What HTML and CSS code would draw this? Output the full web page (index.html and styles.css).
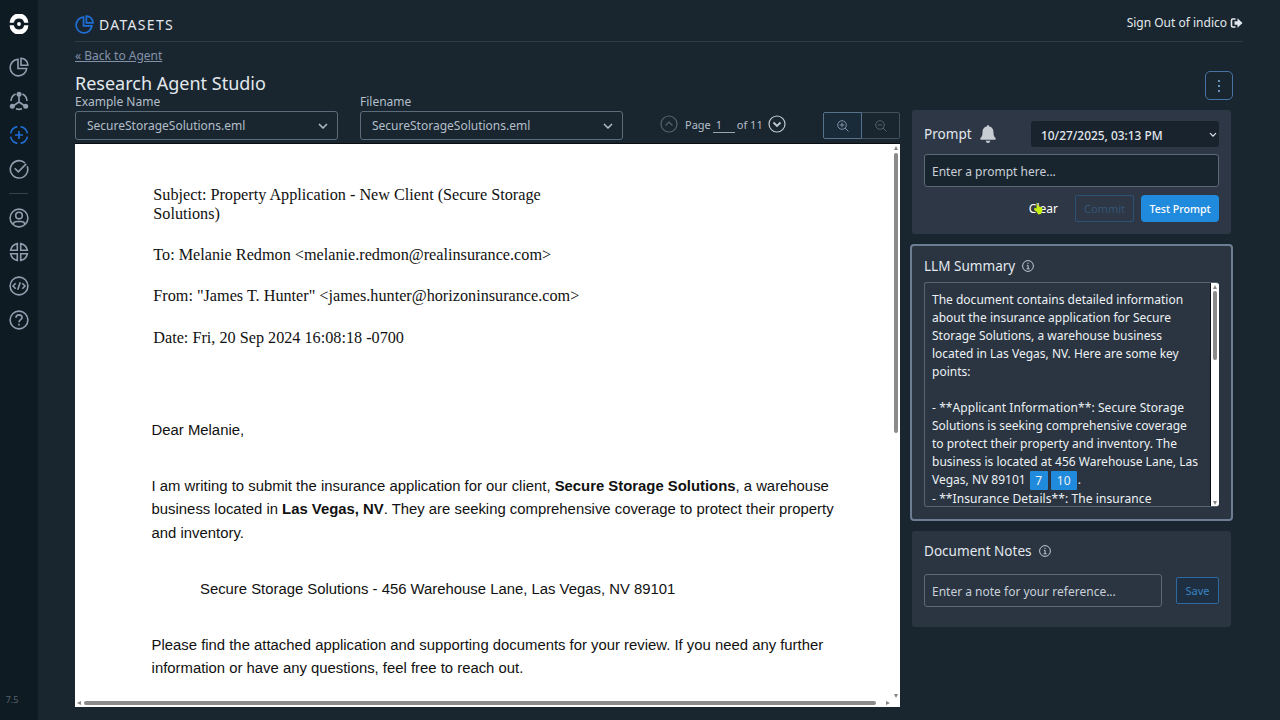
FILE: index.html
```html
<!DOCTYPE html>
<html lang="en">
<head>
    <meta charset="UTF-8">
    <meta name="viewport" content="width=device-width, initial-scale=1.0">
    <title>Research Agent Studio</title>
    <link rel="stylesheet" href="styles.css">
</head>
<body>

    <!-- Sidebar -->
    <nav class="sidebar">
        <svg class="logo" viewBox="0 0 20 20"><path d="M.6 8.800A9.400 9.400 0 0 1 19.400 8.800H15.200A5.300 5.300 0 0 0 4.800 8.800zM.6 11.200A9.400 9.400 0 0 0 19.400 11.200H15.200A5.300 5.300 0 0 1 4.800 11.200z"/><circle cx="10" cy="10" r="1.900"/></svg>
        <svg class="nav-icon" viewBox="0 0 20 20"><path d="M9 2.300A8.300 8.300 0 1 0 17.700 11.500H9zM12 1.200V8.300H18.900A7 7 0 0 0 12 1.200z"/></svg>
        <svg class="nav-icon" viewBox="0 0 20 20"><path d="M6.600 3A8.200 8.200 0 0 0 2 10M13.400 3A8.200 8.200 0 0 1 18 10M7 17.800A9 9 0 0 0 13 17.800M10 4V11L4 15M10 11L16 15"/><circle class="solid" cx="10" cy="3.200" r="2.500"/><circle class="solid" cx="3.300" cy="15.300" r="2.500"/><circle class="solid" cx="16.700" cy="15.300" r="2.500"/></svg>
        <svg class="nav-icon active" viewBox="0 0 20 20"><path d="M8.300 1.600A8.600 8.600 0 0 0 1.600 8.300M11.700 1.600A8.600 8.600 0 0 1 18.400 8.300M1.600 11.700A8.600 8.600 0 0 0 8.300 18.400M18.400 11.700A8.600 8.600 0 0 1 11.700 18.400M10 6V14M6 10H14"/></svg>
        <svg class="nav-icon" viewBox="0 0 20 20"><path d="M16 4A8.700 8.700 0 1 0 18.200 7.300M5.800 9.300L9.300 12.800L17.200 4.900"/></svg>
        <hr class="nav-divider">
        <svg class="nav-icon" viewBox="0 0 20 20"><circle cx="10" cy="10" r="8.900"/><circle cx="10" cy="7.600" r="3.300"/><path d="M4 16.300C5 12.500 8 13.600 10 13.600S15 12.500 16 16.300"/></svg>
        <svg class="nav-icon" viewBox="0 0 20 20"><path d="M8.300 1.600V8.300H1.600A8.600 8.600 0 0 1 8.300 1.600zM11.700 1.600V8.300H18.400A8.600 8.600 0 0 0 11.700 1.600zM8.300 18.400V11.700H1.600A8.600 8.600 0 0 0 8.300 18.400zM11.700 18.400V11.700H18.400A8.600 8.600 0 0 1 11.700 18.400z"/></svg>
        <svg class="nav-icon" viewBox="0 0 20 20"><circle cx="10" cy="10" r="8.900"/><path d="M6.700 7.200L4 10L6.700 12.800M13.300 7.200L16 10L13.300 12.800M11.300 6.300L8.700 13.700"/></svg>
        <svg class="nav-icon" viewBox="0 0 20 20"><circle cx="10" cy="10" r="8.900"/><path d="M7 7.700C7 3.900 13.100 4 13.100 7.600C13.100 9.800 10 9.700 10 12.300M10 13.800V15.500"/></svg>
        <span class="version">7.5</span>
    </nav>

    <main class="main">
        <header class="topbar">
            <div class="brand">
                <svg class="brand-icon" viewBox="0 0 20 20"><path d="M9 2.300A8.300 8.300 0 1 0 17.700 11.500H9zM12 1.200V8.300H18.900A7 7 0 0 0 12 1.200z"/></svg>
                <span>DATASETS</span>
            </div>
            <div class="sign-out">
                <span>Sign Out of indico</span>
                <svg viewBox="0 0 12 10"><path d="M5 1H2.200Q1 1 1 2.200V7.800Q1 9 2.200 9H5" fill="none" stroke="currentColor" stroke-width="1.600"/><path d="M4 3.200H7V.3L12 5L7 9.700V6.800H4z" fill="currentColor"/></svg>
            </div>
        </header>

        <div class="heading">
            <div>
                <a class="back">« Back to Agent</a>
                <h1>Research Agent Studio</h1>
            </div>
            <button class="more"><i></i><i></i><i></i></button>
        </div>

        <div class="workspace">
            <section class="viewer">
                <div class="toolbar">
                    <div class="field">
                        <label>Example Name</label>
                        <div class="select"><span>SecureStorageSolutions.eml</span><svg viewBox="0 0 10 6"><path d="M1 1L5 5L9 1"/></svg></div>
                    </div>
                    <div class="field">
                        <label>Filename</label>
                        <div class="select"><span>SecureStorageSolutions.eml</span><svg viewBox="0 0 10 6"><path d="M1 1L5 5L9 1"/></svg></div>
                    </div>
                    <div class="pager">
                        <svg class="page-btn disabled" viewBox="0 0 18 18"><circle cx="9" cy="9" r="8"/><path d="M5.500 10.500L9 7L12.500 10.500"/></svg>
                        <span class="page-word">Page</span>
                        <span class="page-number">1</span>
                        <span class="page-total">of 11</span>
                        <svg class="page-btn" viewBox="0 0 18 18"><circle cx="9" cy="9" r="8"/><path d="M5.500 7.500L9 11L12.500 7.500" stroke-width="1.800"/></svg>
                    </div>
                    <div class="zoom">
                        <span class="zoom-in"><svg viewBox="0 0 12 12"><circle cx="5" cy="5" r="4.300"/><path d="M8 8L11.500 11.500M2.700 5H7.300M5 2.700V7.300"/></svg></span>
                        <span class="zoom-out"><svg viewBox="0 0 12 12"><circle cx="5" cy="5" r="4.300"/><path d="M8 8L11.500 11.500M2.700 5H7.300"/></svg></span>
                    </div>
                </div>

                <div class="document">
                    <article class="page">
                        <div class="mail-head">
                            <p>Subject: Property Application - New Client (Secure Storage<br>Solutions)</p>
                            <p>To: Melanie Redmon &lt;melanie.redmon@realinsurance.com&gt;</p>
                            <p>From: "James T. Hunter" &lt;james.hunter@horizoninsurance.com&gt;</p>
                            <p>Date: Fri, 20 Sep 2024 16:08:18 -0700</p>
                        </div>
                        <div class="mail-body">
                            <p>Dear Melanie,</p>
                            <p>I am writing to submit the insurance application for our client, <b>Secure Storage Solutions</b>, a warehouse<br>business located in <b>Las Vegas, NV</b>. They are seeking comprehensive coverage to protect their property<br>and inventory.</p>
                            <p class="indent">Secure Storage Solutions - 456 Warehouse Lane, Las Vegas, NV 89101</p>
                            <p>Please find the attached application and supporting documents for your review. If you need any further<br>information or have any questions, feel free to reach out.</p>
                        </div>
                    </article>
                    <div class="scroll-y"><i class="arrow up"></i><i class="thumb"></i><i class="arrow down"></i></div>
                    <div class="scroll-x"><i class="arrow left"></i><i class="thumb"></i><i class="arrow right"></i></div>
                </div>
            </section>

            <aside class="side">
                <section class="card prompt">
                    <div class="card-head">
                        <h2>Prompt</h2>
                        <svg class="bell" viewBox="0 0 16 18"><path d="M8 0Q9.200 0 9.200 1.500C12.500 2.200 13.500 4.500 13.500 7.500C13.500 11 14.500 12 15.700 13.200Q16 14.800 14.800 14.800H1.200Q0 14.800 .3 13.200C1.500 12 2.500 11 2.500 7.500C2.500 4.500 3.500 2.200 6.800 1.500Q6.800 0 8 0zM5.700 15.700H10.300Q10 18 8 18T5.700 15.700z"/></svg>
                        <div class="date"><span>10/27/2025, 03:13 PM</span><svg viewBox="0 0 10 6"><path d="M2 1.200L5 4.200L8 1.200"/></svg></div>
                    </div>
                    <div class="input">Enter a prompt here...</div>
                    <div class="actions">
                        <span class="clear">Clear<svg class="pointer" viewBox="0 0 9 13"><path d="M2.500 0L4 4L8 5.500L8.500 8L7 12L4 12.500L3 10L0 8L.5 5.500L2.500 6.500z"/></svg></span>
                        <button class="btn commit">Commit</button>
                        <button class="btn test">Test Prompt</button>
                    </div>
                </section>

                <section class="card summary">
                    <div class="card-head">
                        <h2>LLM Summary</h2>
                        <svg class="info" viewBox="0 0 12 12"><circle cx="6" cy="6" r="5.400"/><path d="M6 2.800V4M4.800 5.400H6.100V8.700M4.600 8.800H7.600"/></svg>
                    </div>
                    <div class="summary-box">
                        <div class="summary-text">The document contains detailed information<br>about the insurance application for Secure<br>Storage Solutions, a warehouse business<br>located in Las Vegas, NV. Here are some key<br>points:<br><br><span class="item">- **Applicant Information**: Secure Storage</span><br>Solutions is seeking comprehensive coverage<br>to protect their property and inventory. The<br>business is located at 456 Warehouse Lane, Las
                            <div class="cite-line">Vegas, NV 89101 <span class="cite">7</span><span class="cite wide">10</span>.</div>
                            <span class="item">- **Insurance Details**: The insurance</span></div>
                        <div class="summary-scroll"><i class="arrow up"></i><i class="thumb"></i><i class="arrow down"></i></div>
                    </div>
                </section>

                <section class="card notes">
                    <div class="card-head">
                        <h2>Document Notes</h2>
                        <svg class="info" viewBox="0 0 12 12"><circle cx="6" cy="6" r="5.400"/><path d="M6 2.800V4M4.800 5.400H6.100V8.700M4.600 8.800H7.600"/></svg>
                    </div>
                    <div class="note-row">
                        <div class="input">Enter a note for your reference...</div>
                        <button class="btn save">Save</button>
                    </div>
                </section>
            </aside>
        </div>
    </main>

</body>
</html>
```
FILE: styles.css
```css
* {
    box-sizing: border-box;
}

body {
    margin: 0;
    width: 1280px;
    height: 720px;
    overflow: hidden;
    display: flex;
    background-color: #19262f;
    color: #e3e8ee;
    font-family: "Noto Sans", sans-serif;
    font-size: 12px;
    white-space: nowrap;
}

h1, h2, p {
    margin: 0;
    font-weight: normal;
}

svg {
    display: block;
    flex: none;
    fill: none;
    stroke: currentColor;
}

button {
    font-family: inherit;
    padding: 0;
}

/* Sidebar */
.sidebar {
    width: 38px;
    flex: none;
    display: flex;
    flex-direction: column;
    align-items: center;
    padding: 14px 1px 13px 0;
    background-color: #0f1b23;
    color: #919eae;
}

.logo {
    width: 20px;
    height: 20px;
    margin-bottom: 23.3px;
    fill: #fff;
    stroke: none;
}

.solid {
    fill: currentColor;
    stroke: none;
}

.nav-icon {
    width: 20px;
    height: 20px;
    margin-bottom: 13.75px;
    stroke-width: 1.6;
}

.nav-icon.active {
    color: #1f6fd6;
}

.nav-divider {
    width: 19px;
    height: 1px;
    margin: 1px 0 14px;
    border: none;
    background-color: #34424c;
}

.version {
    margin-top: auto;
    margin-right: 13px;
    font-size: 9px;
    line-height: 14px;
    color: #56626c;
}

/* Header */
.main {
    flex: 1;
    display: flex;
    flex-direction: column;
    padding: 0 37px 13px;
}

.topbar {
    height: 42px;
    flex: none;
    display: flex;
    justify-content: space-between;
    align-items: center;
    padding-top: 7px;
    border-bottom: 1px solid #2e3b44;
}

.brand {
    display: flex;
    align-items: center;
    gap: 5px;
    font-size: 14px;
    letter-spacing: 1.3px;
}

.brand-icon {
    width: 19px;
    height: 19px;
    color: #1f6fd6;
    stroke-width: 1.8;
}

.sign-out {
    display: flex;
    align-items: center;
    gap: 3px;
    padding-bottom: 3px;
}

.sign-out svg {
    width: 13px;
    height: 10px;
    stroke: none;
}

.heading {
    height: 50px;
    flex: none;
    display: flex;
    justify-content: space-between;
    padding: 5px 10px 0 0;
}

.back {
    display: block;
    width: max-content;
    line-height: 18px;
    color: #8391a9;
    text-decoration: underline;
}

h1 {
    margin-top: 8px;
    font-size: 18px;
    line-height: 20px;
}

.more {
    width: 28px;
    height: 29px;
    margin-top: 24px;
    display: flex;
    flex-direction: column;
    align-items: center;
    justify-content: center;
    gap: 3px;
    background: none;
    border: 1px solid #4674a5;
    border-radius: 5px;
}

.more i {
    width: 2px;
    height: 2px;
    background-color: #6793be;
}

/* Document viewer */
.workspace {
    flex: 1;
    min-height: 0;
    display: flex;
    gap: 12px;
}

.viewer {
    width: 825px;
    display: flex;
    flex-direction: column;
}

.toolbar {
    display: flex;
    align-items: flex-end;
    height: 48px;
    margin-bottom: 3px;
    color: #b4bec9;
}

.field {
    width: 263px;
    margin-right: 22px;
}

.field label {
    display: block;
    line-height: 16px;
}

.select {
    height: 29px;
    margin-top: 1px;
    display: flex;
    align-items: center;
    justify-content: space-between;
    padding: 0 9px 0 11px;
    border: 1px solid #5d6c7b;
    border-radius: 3px;
}

.select svg {
    width: 10px;
    height: 6px;
    stroke-width: 1.5;
}

.pager {
    display: flex;
    align-items: center;
    height: 30px;
    margin-left: 15px;
    margin-bottom: 1px;
    font-size: 11px;
}

.page-btn {
    width: 18px;
    height: 18px;
    stroke-width: 1.2;
    color: #c0c8d0;
}

.page-btn.disabled {
    color: #56636d;
}

.page-word {
    margin-left: 7px;
}

.page-number {
    width: 22px;
    margin: 1px 2px 0 2px;
    padding-left: 3px;
    line-height: 15px;
    border-bottom: 1px solid #9aa5af;
}

.page-total {
    margin-right: 5px;
}

.zoom {
    margin-left: auto;
    display: flex;
    height: 27px;
    margin-bottom: 1px;
}

.zoom span {
    width: 39px;
    display: flex;
    align-items: center;
    justify-content: center;
    border: 1px solid #41505b;
    border-radius: 0 2px 2px 0;
    color: #53616c;
}

.zoom .zoom-in {
    margin-right: -1px;
    z-index: 1;
    border-color: #56738b;
    border-radius: 2px 0 0 2px;
    background-color: #192a39;
    color: #8094a8;
}

.zoom svg {
    width: 12px;
    height: 12px;
}

.document {
    flex: 1;
    min-height: 0;
    display: grid;
    grid-template-columns: 1fr 8px;
    grid-template-rows: 1fr 8px;
    background-color: #fff;
    border-top: 1px solid #0a0e11;
    color: #111;
}

.page {
    padding: 42px 0 0 76.6px;
    overflow: hidden;
}

.mail-head {
    padding-left: 1.7px;
    font-family: "Liberation Serif", serif;
    font-size: 16.22px;
    line-height: 18.7px;
}

.mail-head p {
    margin-bottom: 22.7px;
}

.mail-body {
    margin-top: 71.6px;
    font-family: "Liberation Sans", sans-serif;
    font-size: 14.86px;
    line-height: 23.3px;
}

.mail-body p {
    margin-bottom: 32.7px;
}

.mail-body .indent {
    padding-left: 48.4px;
}

.scroll-y, .summary-scroll {
    display: flex;
    flex-direction: column;
    align-items: center;
}

.scroll-x {
    display: flex;
    align-items: center;
}

.thumb {
    background-color: #8b8b8b;
    border-radius: 3px;
}

.scroll-y .thumb {
    width: 4px;
    height: 280px;
    margin: 3px 0 auto;
}

.scroll-x .thumb {
    width: 792px;
    height: 4px;
    margin: 0 auto 0 3px;
}

.arrow {
    width: 0;
    height: 0;
    border: 2.5px solid transparent;
}

.up {
    margin-top: 2px;
    border-top: none;
    border-bottom: 4px solid #858585;
}

.down {
    margin-bottom: 1px;
    border-bottom: none;
    border-top: 4px solid #858585;
}

.left {
    margin-left: 2px;
    border-left: none;
    border-right: 4px solid #858585;
}

.right {
    margin-right: 2px;
    border-right: none;
    border-left: 4px solid #858585;
}

/* Right panels */
.side {
    width: 319px;
    padding-top: 18px;
}

.card {
    background-color: #2a3541;
    border-radius: 3px;
}

.card-head {
    display: flex;
    align-items: center;
}

h2 {
    font-size: 13.55px;
    line-height: 20px;
}

.prompt {
    height: 124px;
    padding: 11px 12px 0;
    background-color: #2d3745;
}

.bell {
    width: 16px;
    height: 18px;
    margin-left: 8px;
    fill: #c8ccd3;
    stroke: none;
}

.date {
    width: 188px;
    height: 26px;
    margin-left: auto;
    display: flex;
    align-items: center;
    justify-content: space-between;
    padding: 1px 1px 0 10px;
    background-color: #18232d;
    border-radius: 3px;
    font-size: 11.9px;
    font-weight: 500;
}

.date svg {
    width: 10px;
    height: 6px;
    stroke-width: 1.2;
}

.input {
    height: 33px;
    margin-top: 7px;
    padding-left: 7px;
    line-height: 33px;
    border: 1px solid #5c6976;
    border-radius: 3px;
    background-color: #19252e;
    color: #c9d0d9;
}

.actions {
    display: flex;
    align-items: center;
    justify-content: flex-end;
    margin-top: 8px;
}

.clear {
    position: relative;
    margin-right: 17px;
    color: #fff;
}

.pointer {
    position: absolute;
    left: 5px;
    top: 2px;
    width: 9px;
    height: 13px;
    fill: #c5ef12;
    stroke: none;
}

.btn {
    height: 27px;
    font-size: 11px;
    border-radius: 2px;
}

.commit {
    width: 59px;
    margin-right: 7px;
    background: none;
    border: 1px solid #2c5275;
    color: #345675;
}

.test {
    width: 78px;
    border: none;
    border-radius: 4px;
    background-color: #208bdc;
    color: #fff;
    font-size: 10.6px;
    font-weight: 500;
}

.summary {
    width: 323px;
    height: 277px;
    margin: 10px 0 0 -2px;
    padding: 10px 12px 0;
    border: 2px solid #6d7e92;
    border-radius: 4px;
}

.info {
    width: 12px;
    height: 12px;
    margin-left: 7px;
    color: #c2cad3;
    stroke-width: 1;
}

.summary-box {
    height: 225px;
    margin-top: 6px;
    display: flex;
    justify-content: space-between;
    overflow: hidden;
    border: 1px solid #566473;
    border-right: none;
    border-radius: 3px;
    line-height: 18px;
}

.summary-text {
    padding: 8px 0 0 7px;
    color: #edf1f5;
}

.item {
    letter-spacing: 0.08px;
}

.cite-line {
    height: 19px;
    display: flex;
    align-items: flex-start;
}

.cite {
    width: 18px;
    height: 19px;
    margin: 0 3px 0 4px;
    line-height: 19px;
    text-align: center;
    border-radius: 1px;
    background-color: #208bdc;
}

.cite.wide {
    width: 26px;
    margin: 0 1px 0 0;
}

.summary-scroll {
    width: 9px;
    background-color: #fff;
    border-left: 1px solid #0a0e11;
}

.summary-scroll .thumb {
    width: 4px;
    height: 69px;
    margin: 2px 0 auto;
}

.notes {
    height: 96px;
    margin-top: 10px;
    padding: 10px 12px 0;
}

.note-row {
    display: flex;
    align-items: center;
    justify-content: space-between;
    margin-top: 13px;
}

.note-row .input {
    width: 238px;
    margin: 0;
    background: none;
}

.save {
    width: 43px;
    background-color: #1d2f41;
    border: 1px solid #2e689c;
    color: #3b84c2;
}
```
